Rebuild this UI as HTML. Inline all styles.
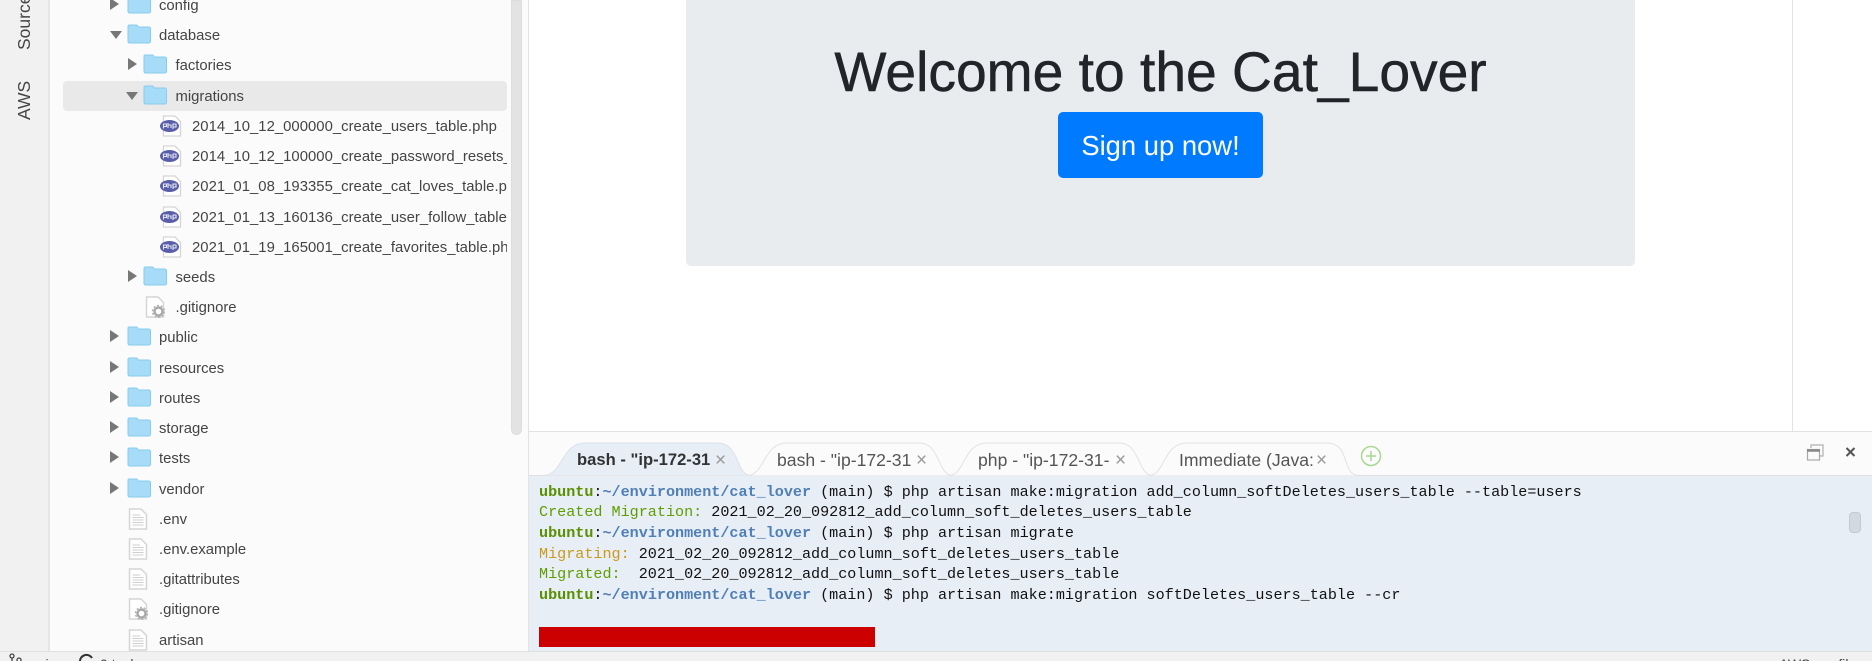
<!DOCTYPE html>
<html><head><meta charset="utf-8"><style>
html,body{margin:0;padding:0;width:1872px;height:661px;overflow:hidden;background:#fff;font-family:"Liberation Sans",sans-serif}
.a{position:absolute}
#rail{left:0;top:0;width:48px;height:652px;background:#f1f1f1;border-right:2px solid #e6e6e6}
.v{position:absolute;transform:rotate(-90deg);transform-origin:left top;font-size:17.5px;color:#444;white-space:nowrap}
#tree{left:50px;top:0;width:478px;height:652px;background:#fbfbfb;overflow:hidden}
#sel{left:13px;top:81px;width:444px;height:30px;background:#e9e9e9;border-radius:4px}
.r{position:absolute;left:0;width:457px;height:30px;line-height:30px;font-size:14.85px;color:#444;white-space:nowrap;overflow:hidden}
.r span{position:absolute;top:1px}
.r svg{position:absolute}
.t1{left:109px}.t2{left:125.5px}.t3{left:142px;letter-spacing:.03px}
.ar{position:absolute;top:8px;width:0;height:0;border-style:solid;border-color:transparent transparent transparent #777;border-width:6.5px 0 6.5px 9px}
.ad{position:absolute;top:11px;width:0;height:0;border-style:solid;border-color:#777 transparent transparent transparent;border-width:8px 6px 0 6px}
#sb{left:511px;top:0;width:11px;height:435px;background:#e3e3e3;border-radius:0 0 6px 6px;border:1px solid #ddd;box-sizing:border-box}
#vl{left:528px;top:0;width:1px;height:652px;background:#e3e3e3}
#rb{left:1792px;top:0;width:1px;height:431px;background:#e3e3e3}
#hero{left:686px;top:-20px;width:949px;height:286px;background:#e9ecef;border-radius:5px}
#h1{left:686px;width:949px;top:37px;height:70px;line-height:70px;text-align:center;font-size:55.2px;color:#212529;white-space:nowrap;-webkit-text-stroke:.5px #212529}
#btn{left:1058px;top:112px;width:205px;height:66px;background:#007bff;border-radius:5px;color:#fff;text-align:center;line-height:67px;font-size:27.4px}
#tb{left:529px;top:431px;width:1343px;height:44px;background:#fbfbfb;border-top:1px solid #e2e2e2;box-sizing:border-box}
#term{left:529px;top:475px;width:1343px;height:176px;background:#e8eef6;border-top:1px solid #e0e0e0;box-sizing:border-box}
.tab{position:absolute;top:446px;height:28px;line-height:28px;font-size:17.6px;color:#555;white-space:nowrap;overflow:hidden}
.x{position:absolute;top:447px;line-height:28px;font-size:19px;color:#999}
.l{position:absolute;left:539px;height:20px;line-height:20px;font-family:"Liberation Mono",monospace;font-size:15.11px;color:#111;white-space:pre}
.l b{color:#5a8f00}.l i{font-style:normal;font-weight:bold;color:#4f7fb5}
.g{color:#5f9e00}.y{color:#c99a1c}
#red{left:539px;top:627px;width:336px;height:20px;background:#cc0000}
#tsb{left:1849px;top:512px;width:12px;height:21px;background:#d3d9e2;border:1px solid #c3cad4;border-radius:4px;box-sizing:border-box}
#st{left:0;top:651px;width:1872px;height:10px;background:#f1f1f1;border-top:1px solid #e0e0e0;box-sizing:border-box;overflow:hidden}
#st span{position:absolute;top:4px;font-size:14px;line-height:17px;color:#444;white-space:nowrap}
</style></head><body>
<svg width="0" height="0" style="position:absolute"><defs>
<symbol id="fo" viewBox="0 0 24 20"><path d="M1 18V2.500Q1 1 2.500 1H9q1.500 0 2.200 2H21.500Q23.500 3 23.500 5V17Q23.500 19 21.500 19H2.500Q1 19 1 17Z" fill="#a6dcf7" stroke="#86cdee"/></symbol>
<symbol id="doc" viewBox="0 0 20 22"><path d="M1.500 1H13L18.500 6.500V21H1.500Z" fill="#fff" stroke="#d5d5d5" stroke-width="1.500"/><path d="M4.500 7H12M4.500 9.500H15.500M4.500 12H15.500M4.500 14.500H15.500M4.500 17H15.500" stroke="#cfcfcf" fill="none"/></symbol>
<symbol id="gear" viewBox="0 0 20 22"><path d="M1.500 1H13L18.500 6.500V21H1.500Z" fill="#fff" stroke="#d5d5d5" stroke-width="1.500"/><circle cx="13.500" cy="15.500" r="4" fill="none" stroke="#a8a8a8" stroke-width="2.400"/><circle cx="13.500" cy="15.500" r="6" fill="none" stroke="#b4b4b4" stroke-width="1.500" stroke-dasharray="2 1.800"/></symbol>
<symbol id="php" viewBox="0 0 22 22"><path d="M3.500 1H15L20.500 6.500V21H3.500Z" fill="#fff" stroke="#d5d5d5" stroke-width="1.300"/><ellipse cx="9.500" cy="11" rx="9.500" ry="6" fill="#5a5ea8"/><path d="M3.500 13.500V9H6.500V11.500H4M8 8V13M8 10H11V13M13 14V9H16V12H13" stroke="#e6e8f6" stroke-width="1.100" fill="none"/></symbol>
</defs></svg>

<div class="a" id="rail"></div>
<div class="v" style="left:14px;top:50px">Source</div>
<div class="v" style="left:14px;top:120px">AWS</div>

<div class="a" id="tree">
<div class="a" id="sel"></div>

<div class="r" style="top:-10px"><div class="ar" style="left:60px"></div><svg style="left:77px;top:4px" width="24" height="20"><use href="#fo"/></svg><span class="t1">config</span></div>
<div class="r" style="top:20px"><div class="ad" style="left:60px"></div><svg style="left:77px;top:4px" width="24" height="20"><use href="#fo"/></svg><span class="t1">database</span></div>
<div class="r" style="top:50px"><div class="ar" style="left:78px"></div><svg style="left:93px;top:4px" width="24" height="20"><use href="#fo"/></svg><span class="t2">factories</span></div>
<div class="r" style="top:81px"><div class="ad" style="left:76px"></div><svg style="left:93px;top:4px" width="24" height="20"><use href="#fo"/></svg><span class="t2">migrations</span></div>
<div class="r" style="top:111px"><svg style="left:110px;top:4px" width="22" height="22"><use href="#php"/></svg><span class="t3">2014_10_12_000000_create_users_table.php</span></div>
<div class="r" style="top:141px"><svg style="left:110px;top:4px" width="22" height="22"><use href="#php"/></svg><span class="t3">2014_10_12_100000_create_password_resets_table.php</span></div>
<div class="r" style="top:171px"><svg style="left:110px;top:4px" width="22" height="22"><use href="#php"/></svg><span class="t3">2021_01_08_193355_create_cat_loves_table.php</span></div>
<div class="r" style="top:202px"><svg style="left:110px;top:4px" width="22" height="22"><use href="#php"/></svg><span class="t3">2021_01_13_160136_create_user_follow_table.php</span></div>
<div class="r" style="top:232px"><svg style="left:110px;top:4px" width="22" height="22"><use href="#php"/></svg><span class="t3">2021_01_19_165001_create_favorites_table.php</span></div>
<div class="r" style="top:262px"><div class="ar" style="left:78px"></div><svg style="left:93px;top:4px" width="24" height="20"><use href="#fo"/></svg><span class="t2">seeds</span></div>
<div class="r" style="top:292px"><svg style="left:95px;top:4px" width="20" height="22"><use href="#gear"/></svg><span class="t2">.gitignore</span></div>
<div class="r" style="top:322px"><div class="ar" style="left:60px"></div><svg style="left:77px;top:4px" width="24" height="20"><use href="#fo"/></svg><span class="t1">public</span></div>
<div class="r" style="top:353px"><div class="ar" style="left:60px"></div><svg style="left:77px;top:4px" width="24" height="20"><use href="#fo"/></svg><span class="t1">resources</span></div>
<div class="r" style="top:383px"><div class="ar" style="left:60px"></div><svg style="left:77px;top:4px" width="24" height="20"><use href="#fo"/></svg><span class="t1">routes</span></div>
<div class="r" style="top:413px"><div class="ar" style="left:60px"></div><svg style="left:77px;top:4px" width="24" height="20"><use href="#fo"/></svg><span class="t1">storage</span></div>
<div class="r" style="top:443px"><div class="ar" style="left:60px"></div><svg style="left:77px;top:4px" width="24" height="20"><use href="#fo"/></svg><span class="t1">tests</span></div>
<div class="r" style="top:474px"><div class="ar" style="left:60px"></div><svg style="left:77px;top:4px" width="24" height="20"><use href="#fo"/></svg><span class="t1">vendor</span></div>
<div class="r" style="top:504px"><svg style="left:78px;top:4px" width="20" height="22"><use href="#doc"/></svg><span class="t1">.env</span></div>
<div class="r" style="top:534px"><svg style="left:78px;top:4px" width="20" height="22"><use href="#doc"/></svg><span class="t1">.env.example</span></div>
<div class="r" style="top:564px"><svg style="left:78px;top:4px" width="20" height="22"><use href="#doc"/></svg><span class="t1">.gitattributes</span></div>
<div class="r" style="top:594px"><svg style="left:78px;top:4px" width="20" height="22"><use href="#gear"/></svg><span class="t1">.gitignore</span></div>
<div class="r" style="top:625px"><svg style="left:78px;top:4px" width="20" height="22"><use href="#doc"/></svg><span class="t1">artisan</span></div>
</div>
<div class="a" id="sb"></div>
<div class="a" id="vl"></div>
<div class="a" id="rb"></div>

<div class="a" id="hero"></div>
<div class="a" id="h1">Welcome to the Cat_Lover</div>
<div class="a" id="btn">Sign up now!</div>

<div class="a" id="tb"></div>
<div class="a" id="term"></div>
<svg class="a" style="left:529px;top:431px" width="1343" height="46" fill="#fbfbfb" stroke="#e3e3e3">
<path d="M218 44.500C236 44.500 234 12 258 12H390C412 12 408 44.500 424 44.500"/>
<path d="M420 44.500C436 44.500 434 12 458 12H590C612 12 608 44.500 624 44.500"/>
<path d="M620 44.500C636 44.500 634 12 658 12H798C822 12 812 44.500 830 44.500"/>
<path d="M14 44.500C34 44.500 32 12 56 12H188C212 12 206 44.500 222 44.500" fill="#e8eef6" stroke="#dbe2ea"/>
<circle cx="842" cy="25" r="9.500" fill="none" stroke="#a8d88f" stroke-width="1.500"/>
<path d="M842 20V30M837 25H847" fill="none" stroke="#a8d88f" stroke-width="1.500"/>
<path d="M1282 17V14H1294V25H1291" fill="none" stroke="#b0b0b0" stroke-width="1.200"/>
<rect x="1278.500" y="18.500" width="12" height="10.500" fill="none" stroke="#aaa" stroke-width="1.200"/>
<path d="M1278 19.500H1291" stroke="#888" stroke-width="2.500" fill="none"/>
<path d="M1317.500 17L1325.500 25M1325.500 17L1317.500 25" fill="none" stroke="#555" stroke-width="2"/>
</svg>
<div class="tab" style="left:577px;width:135px;font-weight:bold;color:#333;font-size:16.6px">bash - "ip-172-31</div>
<div class="x" style="left:715px">×</div>
<div class="tab" style="left:777px;width:135px">bash - "ip-172-31</div>
<div class="x" style="left:916px">×</div>
<div class="tab" style="left:978px;width:135px">php - "ip-172-31-</div>
<div class="x" style="left:1115px">×</div>
<div class="tab" style="left:1179px;width:134px">Immediate (Java:</div>
<div class="x" style="left:1316px">×</div>

<div class="l" style="top:481.500px"><b>ubuntu</b>:<i>~/environment/cat_lover</i> (main) $ php artisan make:migration add_column_softDeletes_users_table --table=users</div>
<div class="l" style="top:502px"><span class="g">Created Migration:</span> 2021_02_20_092812_add_column_soft_deletes_users_table</div>
<div class="l" style="top:523px"><b>ubuntu</b>:<i>~/environment/cat_lover</i> (main) $ php artisan migrate</div>
<div class="l" style="top:544px"><span class="y">Migrating:</span> 2021_02_20_092812_add_column_soft_deletes_users_table</div>
<div class="l" style="top:564px"><span class="g">Migrated:</span>  2021_02_20_092812_add_column_soft_deletes_users_table</div>
<div class="l" style="top:585px"><b>ubuntu</b>:<i>~/environment/cat_lover</i> (main) $ php artisan make:migration softDeletes_users_table --cr</div>
<div class="a" id="red"></div>
<div class="a" id="tsb"></div>

<div class="a" id="st">
<svg class="a" style="left:8px;top:1px" width="18" height="9" fill="none" stroke="#444" stroke-width="1.300"><circle cx="4" cy="3" r="2"/><circle cx="11" cy="7" r="2"/><path d="M4 5V10"/></svg>
<span style="left:26px">main</span>
<svg class="a" style="left:78px;top:0" width="18" height="10" fill="none" stroke="#333" stroke-width="2"><path d="M2 10A6.500 6.500 0 0 1 14 6"/></svg>
<span style="left:100px">0 tasks</span>
<span style="left:1779px">AWS: profile</span>
</div>
</body></html>
